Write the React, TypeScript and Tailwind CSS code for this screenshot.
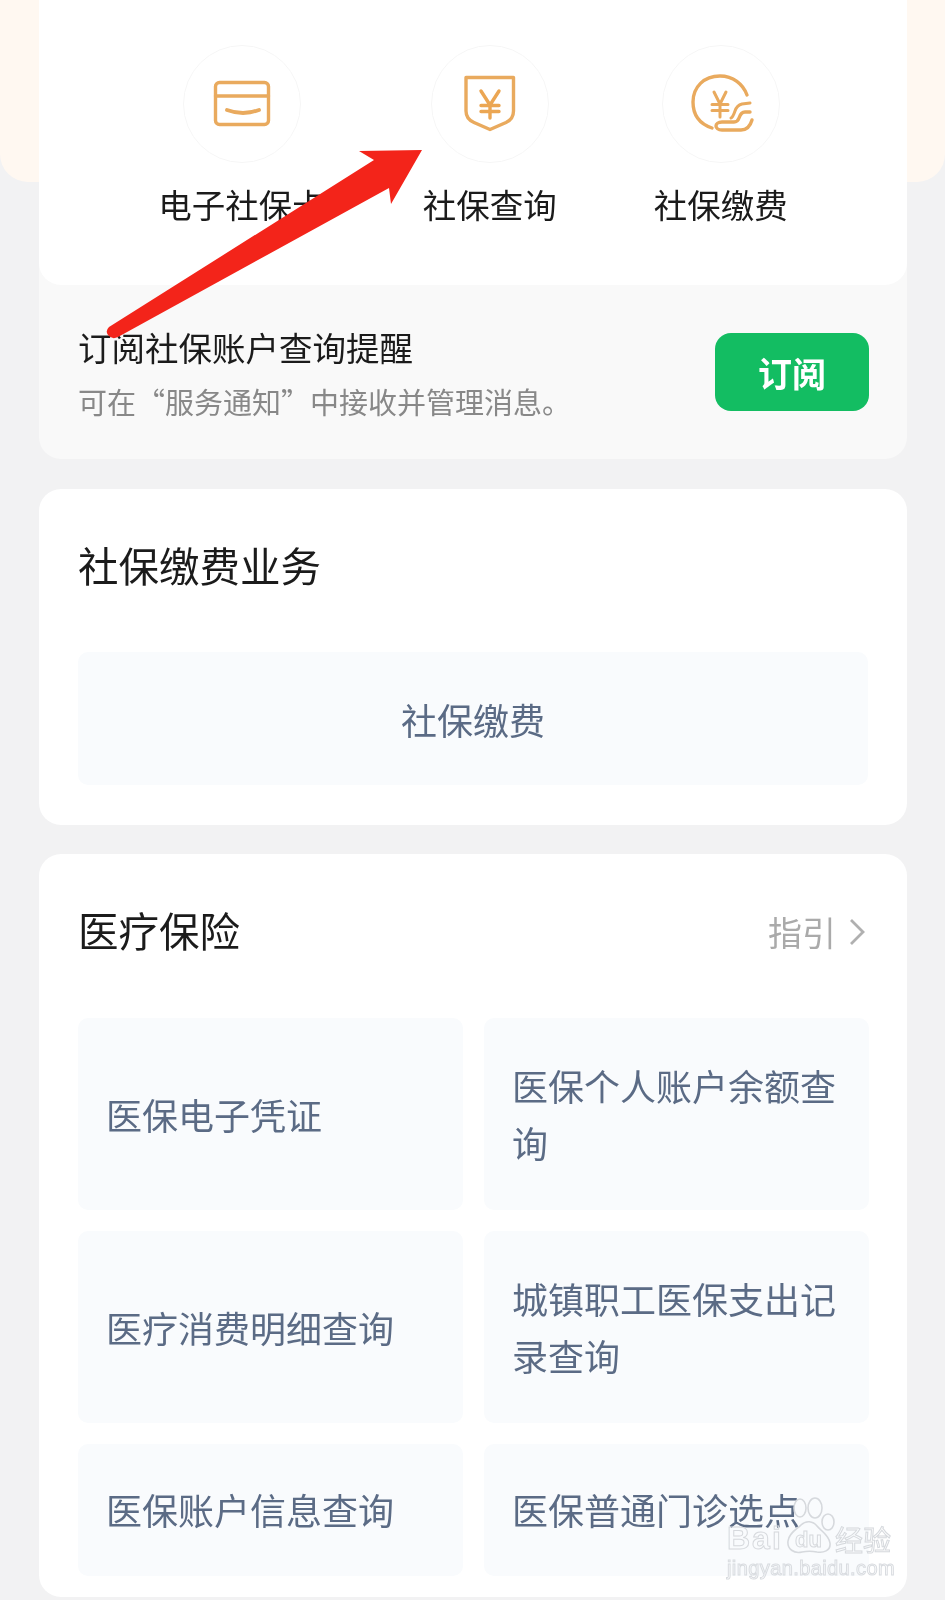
import React from "react";

const FONT = '"Noto Sans CJK SC", "Noto Sans", sans-serif';

function CircleIcon({ children }: { children: React.ReactNode }) {
  return (
    <div className="w-[118px] h-[118px] rounded-full border border-[#f6f6f6] bg-white">
      <svg viewBox="0 0 118 118" className="w-[118px] h-[118px] -m-px" fill="none" stroke="#e9aa5e" strokeWidth="3.4" strokeLinecap="round" strokeLinejoin="round">
        {children}
      </svg>
    </div>
  );
}

function Action({ label, children }: { label: string; children: React.ReactNode }) {
  return (
    <div className="flex flex-col items-center">
      <CircleIcon>{children}</CircleIcon>
      <div className="mt-[19px] text-[33.5px] leading-[44px] text-[#1b1b1b] whitespace-nowrap">{label}</div>
    </div>
  );
}

function Tile({ text, short }: { text: string; short?: boolean }) {
  return (
    <div className={`flex items-center bg-[#f9fbfd] rounded-[10px] px-[28px] text-[36px] leading-[57px] text-[#5b6b85] ${short ? "h-[132px] pb-[2px]" : "py-[39px]"}`}>
      <span>{text}</span>
    </div>
  );
}

export default function App() {
  return (
    <div className="relative w-[945px] h-[1600px] overflow-hidden bg-[#f2f2f3] blur-[0.4px]" style={{ fontFamily: FONT }}>
      <div className="absolute left-0 top-0 w-[945px] h-[182px] rounded-b-[28px] bg-[#fff8f1]" />

      <div className="relative pl-[39px] pr-[38px] flex flex-col">
        <div className="rounded-b-[22px] overflow-hidden bg-[#f9f9f9]">
          <div className="bg-white h-[285px] pt-[45px] flex justify-center gap-[97px] rounded-b-[22px]">
            <Action label="电子社保卡">
              <rect x="32.5" y="37.5" width="53" height="42" rx="4" />
              <path d="M32.5 51H85.5" />
              <path d="M44 65Q60 71 76 65" strokeWidth="3.8" />
            </Action>
            <Action label="社保查询">
              <path d="M35 32.5H82.5V66Q82.5 74 75 77.5L59 84.5L43 77.5Q35 74 35 66Z" />
              <path d="M50 46L59 60L68 46M59 60V73M50 60.5H68M50 66.5H68" stroke="#eba653" />
            </Action>
            <Action label="社保缴费">
              <path d="M50 83C38 79 31 70 31 57C31 42 42 31 58 31C71 31 81 39 85 50" />
              <path d="M52 47L58 59L64 47M58 59V72M50 59.5H66M50 65.5H66" strokeWidth="3" />
              <path d="M88 58L80 59C76 60 74 63 73 66C72 69 71 72 69 73" strokeWidth="3" />
              <path d="M88 67H83C80 67 78 70 77 73C76 76 75 77 72 77H60C56 77 54 79 54 81C54 83 56 85 60 85H79C84 85 88 82 90 75" />
            </Action>
          </div>
          <div className="h-[174px] pl-[39px] pr-[38px] flex items-center justify-between">
            <div>
              <div className="text-[33.5px] leading-[46px] text-[#1b1b1b]">订阅社保账户查询提醒</div>
              <div className="mt-[11px] text-[29px] leading-[40px] text-[#888888]">可在“服务通知”中接收并管理消息。</div>
            </div>
            <div className="w-[154px] h-[78px] rounded-[16px] bg-[#13bd62] text-white text-[34px] font-bold flex items-center justify-center">订阅</div>
          </div>
        </div>

        <div className="mt-[30px] h-[336px] bg-white rounded-[22px] px-[39px] pt-[48px]">
          <div className="text-[40.5px] leading-[56px] text-[#1b1b1b]">社保缴费业务</div>
          <div className="mt-[59px] h-[133px] bg-[#f9fbfd] rounded-[10px] flex items-center justify-center text-[36px] text-[#5b6b85]">社保缴费</div>
        </div>

        <div className="mt-[29px] bg-white rounded-[22px] pl-[39px] pr-[38px] pt-[48px] pb-[21px]">
          <div className="flex items-center justify-between h-[56px]">
            <div className="text-[40.5px] leading-[56px] text-[#1b1b1b]">医疗保险</div>
            <div className="flex items-center mt-[3px] mr-[2px] text-[34px] text-[#aaaaaa]">
              <span>指引</span>
              <svg width="18" height="30" viewBox="0 0 18 30" fill="none" stroke="#b0b0b0" strokeWidth="2.8" className="ml-[13px]">
                <path d="M2 3L14 15L2 27" />
              </svg>
            </div>
          </div>
          <div className="mt-[60px] grid grid-cols-[385px_385px] gap-x-[21px] gap-y-[21px]">
            <Tile text="医保电子凭证" />
            <Tile text="医保个人账户余额查询" />
            <Tile text="医疗消费明细查询" />
            <Tile text="城镇职工医保支出记录查询" />
            <Tile text="医保账户信息查询" short />
            <Tile text="医保普通门诊选点" short />
          </div>
        </div>
      </div>

      {/* red annotation arrow */}
      <svg className="absolute left-0 top-0 pointer-events-none" width="945" height="400" viewBox="0 0 945 400">
        <path d="M422 150L359 151L374 160L109 327Q105 331 108 335Q112 340 118 337L389 188L391 204Z" fill="#f3241a" />
      </svg>

      {/* watermark */}
      <div className="absolute left-[727px] top-[1494px] w-[175px] h-[90px] pointer-events-none">
        <svg className="absolute left-[55px] top-0" width="60" height="62" viewBox="0 0 60 62" fill="none" stroke="#d6d9dd" strokeWidth="1.6">
          <ellipse cx="18" cy="14" rx="6" ry="9" />
          <ellipse cx="33" cy="14" rx="7" ry="10" />
          <ellipse cx="46" cy="28" rx="6" ry="8" />
          <path d="M6 47C7 39 14 36 19 31C24 26 31 27 35 32C39 37 47 41 48 49C49 57 41 59 35 58C30 57 25 57 20 58C12 60 5 55 6 47Z" />
        </svg>
        <div className="absolute left-0 top-[24px] text-[32px] leading-[40px] font-bold text-transparent tracking-[2px] [-webkit-text-stroke:1px_#d6d9dd]" style={{ fontFamily: '"Liberation Sans", sans-serif' }}>Bai</div>
        <div className="absolute left-[68px] top-[32px] text-[22px] leading-[28px] font-bold text-transparent [-webkit-text-stroke:1px_#d6d9dd]" style={{ fontFamily: '"Liberation Sans", sans-serif' }}>du</div>
        <div className="absolute left-[108px] top-[27px] text-[28px] leading-[36px] text-transparent [-webkit-text-stroke:1px_#d6d9dd]">经验</div>
        <div className="absolute left-0 top-[62px] text-[20px] leading-[24px] text-transparent tracking-[0.4px] [-webkit-text-stroke:1px_#d9dce0] whitespace-nowrap" style={{ fontFamily: '"Liberation Sans", sans-serif' }}>jingyan.baidu.com</div>
      </div>
    </div>
  );
}
